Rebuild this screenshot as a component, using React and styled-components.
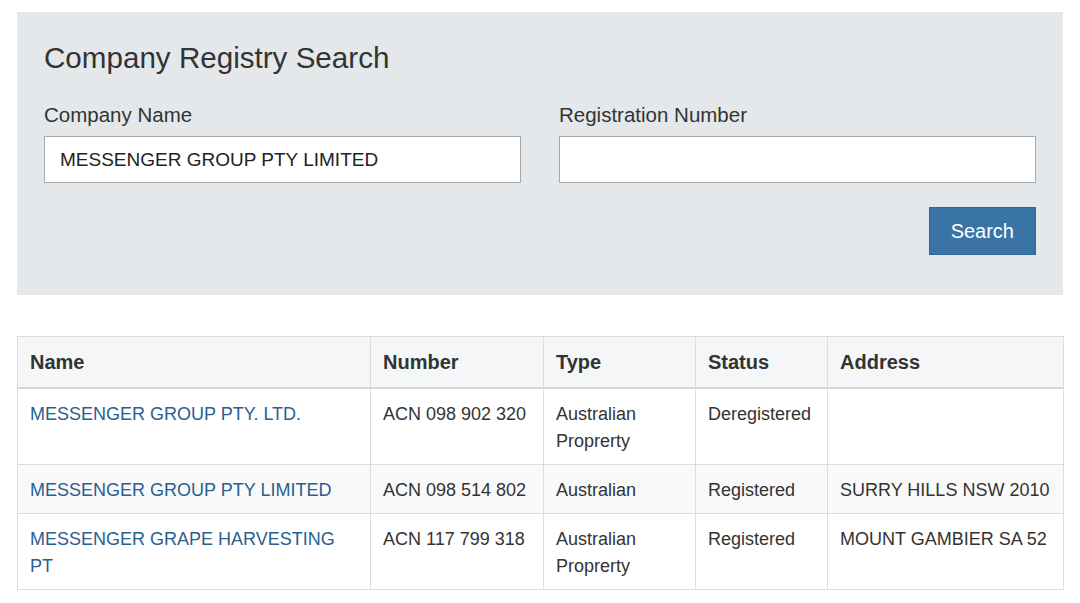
import React from "react";
import styled, { createGlobalStyle } from "styled-components";

const GlobalStyle = createGlobalStyle`
  body {
    margin: 0;
    background: #ffffff;
    font-family: "Liberation Sans", Arial, Helvetica, sans-serif;
    color: #333333;
  }
`;

const Page = styled.div`
  padding: 12px 17px;
`;

// =========== Search panel ===========

const SearchPanel = styled.section`
  background: #e4e8eb;
  padding: 28px 27px 40px;
`;

const Title = styled.h1`
  margin: 0;
  font-size: 29.6px;
  line-height: 35px;
  font-weight: 400;
  color: #333333;
`;

const FieldRow = styled.div`
  display: grid;
  grid-template-columns: 1fr 1fr;
  column-gap: 38px;
  margin-top: 27px;
`;

const Field = styled.label`
  display: flex;
  flex-direction: column;
  gap: 9px;
`;

const FieldLabel = styled.span`
  font-size: 20.5px;
  line-height: 25px;
  color: #333333;
`;

const TextInput = styled.input`
  box-sizing: border-box;
  height: 47px;
  width: 100%;
  margin: 0;
  padding: 0 15px;
  border: 1px solid #a8aaac;
  background: #ffffff;
  font-family: inherit;
  font-size: 19px;
  color: #222222;
  outline: none;
`;

const ButtonRow = styled.div`
  display: flex;
  justify-content: flex-end;
  margin-top: 24px;
`;

const SearchButton = styled.button`
  height: 48px;
  padding: 0 21px;
  border: 1px solid #2f6695;
  background: #3a74a7;
  color: #ffffff;
  font-family: inherit;
  font-size: 20px;
  cursor: pointer;
`;

// =========== Results table ===========

const ResultsTable = styled.table`
  width: 100%;
  margin-top: 41px;
  border-collapse: collapse;
  table-layout: fixed;
  border: 1px solid #dcdcdc;
`;

const HeadCell = styled.th`
  text-align: left;
  padding: 12px 12px 11px;
  font-size: 20px;
  line-height: 27px;
  font-weight: 700;
  color: #333333;
  background: #f5f6f7;
  border: 1px solid #dcdcdc;
  border-bottom: 2px solid #d6d6d6;
`;

const Row = styled.tr`
  background: ${(p) => (p.$striped ? "#f9f9f9" : "#ffffff")};
`;

const Cell = styled.td`
  vertical-align: top;
  padding: 12px 12px 9px;
  font-size: 18px;
  line-height: 27px;
  color: #333333;
  border: 1px solid #dcdcdc;
  white-space: ${(p) => (p.$nowrap ? "nowrap" : "normal")};
  overflow: hidden;
`;

const CompanyLink = styled.a`
  color: #2a6090;
  text-decoration: none;
`;

const columns = [
  { label: "Name", width: 353 },
  { label: "Number", width: 173 },
  { label: "Type", width: 152 },
  { label: "Status", width: 132 },
  { label: "Address", width: 236 },
];

const results = [
  {
    name: "MESSENGER GROUP PTY. LTD.",
    number: "ACN 098 902 320",
    type: "Australian Proprerty",
    status: "Deregistered",
    address: "",
  },
  {
    name: "MESSENGER GROUP PTY LIMITED",
    number: "ACN 098 514 802",
    type: "Australian",
    status: "Registered",
    address: "SURRY HILLS NSW 2010",
  },
  {
    name: "MESSENGER GRAPE HARVESTING PT",
    number: "ACN 117 799 318",
    type: "Australian Proprerty",
    status: "Registered",
    address: "MOUNT GAMBIER SA 52",
  },
];

const App = () => (
  <Page>
    <GlobalStyle />
    <SearchPanel>
      <Title>Company Registry Search</Title>
      <FieldRow>
        <Field>
          <FieldLabel>Company Name</FieldLabel>
          <TextInput defaultValue="MESSENGER GROUP PTY LIMITED" />
        </Field>
        <Field>
          <FieldLabel>Registration Number</FieldLabel>
          <TextInput defaultValue="" />
        </Field>
      </FieldRow>
      <ButtonRow>
        <SearchButton type="button">Search</SearchButton>
      </ButtonRow>
    </SearchPanel>

    <ResultsTable>
      <colgroup>
        {columns.map((c) => (
          <col key={c.label} style={{ width: c.width }} />
        ))}
      </colgroup>
      <thead>
        <tr>
          {columns.map((c) => (
            <HeadCell key={c.label}>{c.label}</HeadCell>
          ))}
        </tr>
      </thead>
      <tbody>
        {results.map((r, i) => (
          <Row key={r.number} $striped={i % 2 === 1}>
            <Cell>
              <CompanyLink href="#">{r.name}</CompanyLink>
            </Cell>
            <Cell $nowrap>{r.number}</Cell>
            <Cell>{r.type}</Cell>
            <Cell>{r.status}</Cell>
            <Cell $nowrap>{r.address}</Cell>
          </Row>
        ))}
      </tbody>
    </ResultsTable>
  </Page>
);

export default App;
